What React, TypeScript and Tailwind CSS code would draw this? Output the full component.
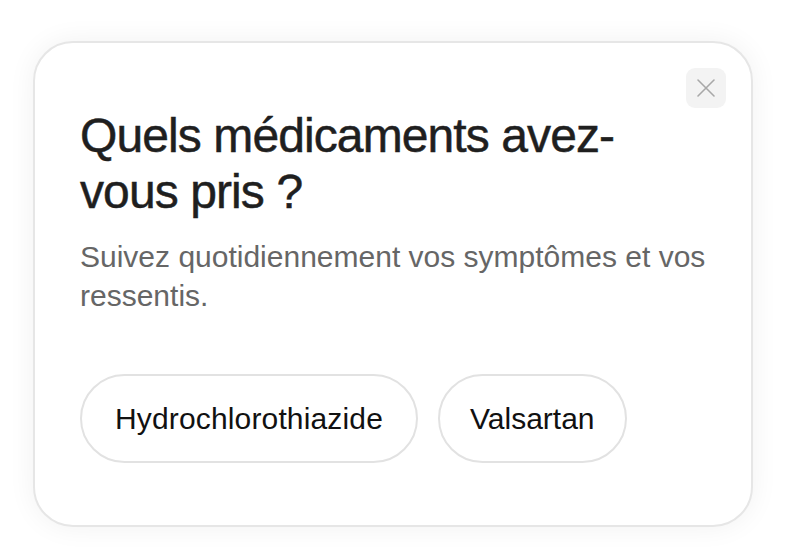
import React from "react";

export default function App() {
  return (
    <div className="w-[785px] h-[551px] bg-white pt-[41px] pl-[33px]" style={{ fontFamily: '"Liberation Sans", Arial, sans-serif' }}>
      <div className="relative w-[720px] h-[486px] rounded-[40px] border-2 border-[#e6e6e6] bg-white shadow-[0_0_28px_rgba(0,0,0,0.06)] pt-[65px] pl-[45px] pr-[40px]">
        <button className="absolute top-[25px] right-[25px] w-[40px] h-[40px] rounded-[9px] bg-[#f3f3f3] flex items-center justify-center">
          <svg width="20" height="20" viewBox="0 0 20 20" fill="none" stroke="#a8a8a8" strokeWidth="1.6" strokeLinecap="round">
            <path d="M2 2L18 18M18 2L2 18" />
          </svg>
        </button>
        <h1 className="text-[48px] leading-[56px] tracking-[-0.9px] text-[#1f1f1f] font-normal w-[560px] [-webkit-text-stroke:0.5px_#1f1f1f]">
          Quels médicaments avez-vous pris ?
        </h1>
        <p className="mt-[17px] text-[30px] leading-[39px] text-[#666666] w-[640px]">
          Suivez quotidiennement vos symptômes et vos ressentis.
        </p>
        <div className="mt-[59px] flex gap-[20px]">
          <button className="h-[89px] px-[33px] rounded-full border-2 border-[#e2e2e2] text-[30px] tracking-[0.15px] text-[#111111]">
            Hydrochlorothiazide
          </button>
          <button className="h-[89px] px-[30px] rounded-full border-2 border-[#e2e2e2] text-[30px] tracking-[0px] text-[#111111]">
            Valsartan
          </button>
        </div>
      </div>
    </div>
  );
}
